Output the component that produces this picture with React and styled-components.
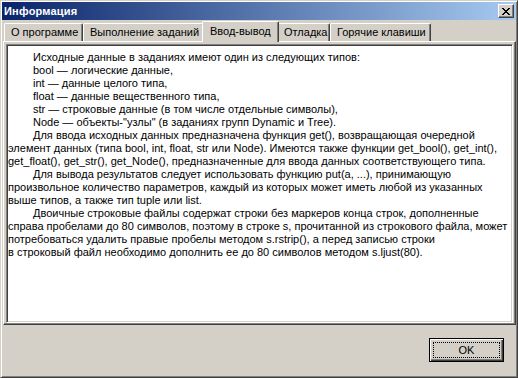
import React from 'react';
import styled, { createGlobalStyle } from 'styled-components';

const GlobalStyle = createGlobalStyle`
  body {
    margin: 0;
    background: #d4d0c8;
    font-family: "Liberation Sans", Arial, sans-serif;
    font-size: 11px;
  }
`;

const tabs = [
  { label: 'О программе', width: 79 },
  { label: 'Выполнение заданий', width: 121 },
  { label: 'Ввод-вывод', width: 73, active: true },
  { label: 'Отладка', width: 53 },
  { label: 'Горячие клавиши', width: 101 }
];

const lines = [
  { text: 'Исходные данные в заданиях имеют один из следующих типов:', indent: true },
  { text: 'bool — логические данные,', indent: true },
  { text: 'int — данные целого типа,', indent: true },
  { text: 'float — данные вещественного типа,', indent: true },
  { text: 'str — строковые данные (в том числе отдельные символы),', indent: true },
  { text: 'Node — объекты-"узлы" (в заданиях групп Dynamic и Tree).', indent: true },
  { text: 'Для ввода исходных данных предназначена функция get(), возвращающая очередной', indent: true },
  { text: 'элемент данных (типа bool, int, float, str или Node). Имеются также функции get_bool(), get_int(),' },
  { text: 'get_float(), get_str(), get_Node(), предназначенные для ввода данных соответствующего типа.' },
  { text: 'Для вывода результатов следует использовать функцию put(a, ...), принимающую', indent: true },
  { text: 'произвольное количество параметров, каждый из которых может иметь любой из указанных' },
  { text: 'выше типов, а также тип tuple или list.' },
  { text: 'Двоичные строковые файлы содержат строки без маркеров конца строк, дополненные', indent: true },
  { text: 'справа пробелами до 80 символов, поэтому в строке s, прочитанной из строкового файла, может' },
  { text: 'потребоваться удалить правые пробелы методом s.rstrip(), а перед записью строки' },
  { text: 'в строковый файл необходимо дополнить ее до 80 символов методом s.ljust(80).' }
];

const App = () => {
  return (
    <>
      <GlobalStyle />
      <Window>
        <TitleBar>
          <Title>Информация</Title>
          <CloseButton>
            <svg width="8" height="7" viewBox="0 0 8 7">
              <path d="M0 0h2v1h1v1h2V1h1V0h2v1H7v1H6v1H5v1h1v1h1v1h1v1H6V6H5V5H3v1H2v1H0V6h1V5h1V4h1V3H2V2H1V1H0z" fill="#000" />
            </svg>
          </CloseButton>
        </TitleBar>
        <TabStrip>
          {tabs.map((tab) => (
            <Tab key={tab.label} $width={tab.width} $active={tab.active}>
              {tab.label}
            </Tab>
          ))}
        </TabStrip>
        <Panel>
          <TextBox>
            {lines.map((line, i) => (
              <Line key={i} $indent={line.indent}>{line.text}</Line>
            ))}
          </TextBox>
        </Panel>
        <Footer>
          <OkButton>
            <Focus>OK</Focus>
          </OkButton>
        </Footer>
      </Window>
    </>
  );
};

const Window = styled.div`
  box-sizing: border-box;
  width: 518px;
  height: 378px;
  padding: 1px;
  display: flex;
  flex-direction: column;
  background: #d4d0c8;
  border: 1px solid;
  border-color: #d4d0c8 #404040 #404040 #d4d0c8;
  box-shadow: inset 1px 1px #fff, inset -1px -1px #808080;
`;

const TitleBar = styled.div`
  height: 18px;
  flex: none;
  display: flex;
  align-items: center;
  justify-content: space-between;
  padding: 0 2px;
  background: linear-gradient(to right, #0a246a, #a6caf0);
`;

const Title = styled.span`
  color: #fff;
  font-weight: bold;
  font-size: 11px;
  letter-spacing: 0.2px;
`;

const CloseButton = styled.div`
  box-sizing: border-box;
  width: 16px;
  height: 14px;
  display: flex;
  align-items: center;
  justify-content: center;
  background: #d4d0c8;
  border: 1px solid;
  border-color: #fff #404040 #404040 #fff;
  box-shadow: inset -1px -1px #808080;
`;

const TabStrip = styled.div`
  height: 20px;
  margin-top: 1px;
  padding-left: 2px;
  display: flex;
  align-items: flex-end;
  flex: none;
  position: relative;
  z-index: 1;
`;

const Tab = styled.div`
  box-sizing: border-box;
  width: ${(p) => (p.$active ? p.$width + 4 : p.$width)}px;
  height: ${(p) => (p.$active ? 21 : 18)}px;
  margin: ${(p) => (p.$active ? '0 -2px -1px' : '0')};
  padding: ${(p) => (p.$active ? '3px 0 0 7px' : '2px 0 0 6px')};
  background: #d4d0c8;
  border-top: 1px solid #fff;
  border-left: 1px solid #fff;
  border-right: 1px solid #404040;
  border-radius: 2px 2px 0 0;
  box-shadow: inset -1px 0 #808080;
  color: #000;
  white-space: nowrap;
  position: relative;
  z-index: ${(p) => (p.$active ? 2 : 0)};
`;

const Panel = styled.div`
  box-sizing: border-box;
  height: 284px;
  margin-left: 1px;
  padding: 2px 2px 1px 2px;
  flex: none;
  display: flex;
  border: 1px solid;
  border-color: #fff #404040 #404040 #fff;
  box-shadow: inset -1px -1px #808080;
`;

const TextBox = styled.div`
  flex: 1;
  padding: 6px 0 0 1px;
  background: #fff;
  border: 1px solid;
  border-color: #808080 #fff #fff #808080;
  box-shadow: inset 1px 1px #404040, inset -1px -1px #d4d0c8;
  overflow: hidden;
`;

const Line = styled.div`
  height: 13px;
  line-height: 13px;
  white-space: nowrap;
  color: #000;
  padding-left: ${(p) => (p.$indent ? 25 : 0)}px;
`;

const Footer = styled.div`
  flex: 1;
  display: flex;
  justify-content: flex-end;
  align-items: flex-start;
  padding: 13px 12px 0 0;
`;

const OkButton = styled.div`
  box-sizing: border-box;
  width: 75px;
  height: 24px;
  padding: 3px;
  border: 1px solid #000;
  background: #d4d0c8;
  box-shadow: inset 1px 1px #fff, inset -1px -1px #404040, inset -2px -2px #808080;
  display: flex;
`;

const Focus = styled.div`
  flex: 1;
  display: flex;
  align-items: center;
  justify-content: center;
  border: 1px dotted #000;
  color: #000;
  font-size: 11px;
`;

export default App;
